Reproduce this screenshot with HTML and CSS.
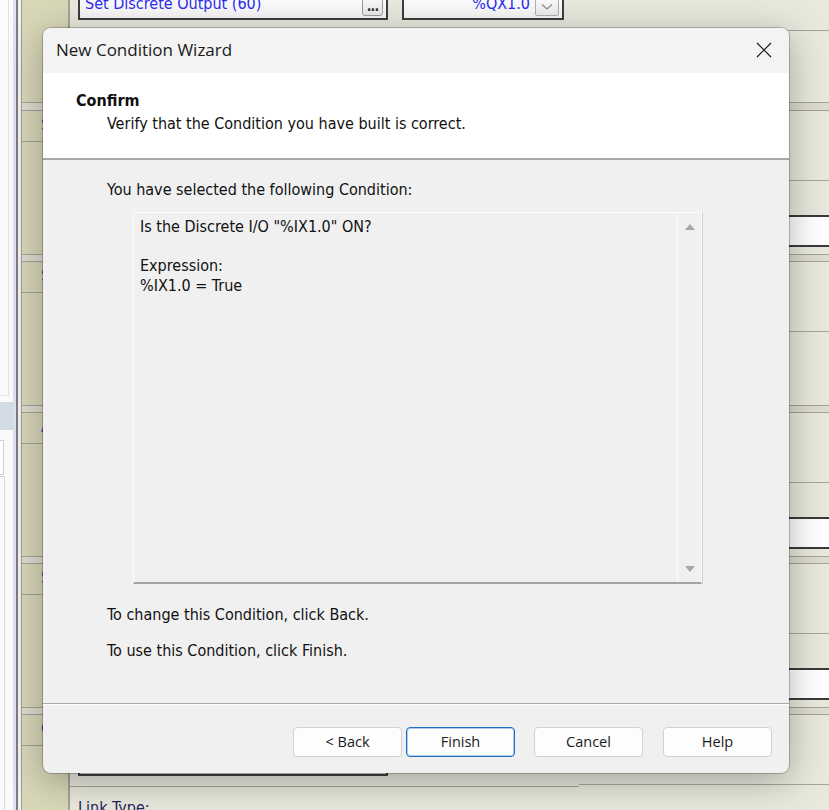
FILE: index.html
```html
<!DOCTYPE html>
<html>
<head>
<meta charset="utf-8">
<link rel="stylesheet" href="styles.css">
</head>
<body>
<div class="screen">
  <div class="sidebar">
    <div class="side-panel">
      <div class="sp-box1"></div>
      <div class="sp-blue"></div>
      <div class="sp-box2"></div>
      <div class="sp-box3"></div>
    </div>
    <div class="side-lilac"></div>
    <div class="side-dark"></div>
    <div class="side-light"></div>
  </div>

  <div class="form">
    <div class="topsec">
      <div class="g-label"></div>
      <div class="g-body">
        <div class="g-main">
          <div class="fieldrow top-fields">
            <div class="field action">
              <span class="field-text">Set Discrete Output (60)</span>
              <span class="dots-btn">...</span>
            </div>
            <div class="field target">
              <span class="field-text right">%QX1.0</span>
              <span class="drop-btn"><svg width="14" height="8" viewBox="0 0 14 8"><path d="M2 1.5 L7 6 L12 1.5" fill="none" stroke="#8a8a8a" stroke-width="1.2"/></svg></span>
            </div>
          </div>
        </div>
        <div class="g-side"><div class="side-line short"></div></div>
      </div>
    </div>

    <div class="group first">
      <div class="g-label"><div class="g-head">Step</div></div>
      <div class="g-body">
        <div class="g-main"></div>
        <div class="g-side"><div class="side-line"></div><div class="side-field"></div></div>
      </div>
    </div>

    <div class="group">
      <div class="g-label"><div class="g-head">Step</div></div>
      <div class="g-body">
        <div class="g-main"></div>
        <div class="g-side"><div class="side-line"></div></div>
      </div>
    </div>

    <div class="group">
      <div class="g-label"><div class="g-head">Action</div></div>
      <div class="g-body">
        <div class="g-main"></div>
        <div class="g-side"><div class="side-line"></div><div class="side-field"></div></div>
      </div>
    </div>

    <div class="group">
      <div class="g-label"><div class="g-head">Step</div></div>
      <div class="g-body">
        <div class="g-main"></div>
        <div class="g-side"><div class="side-line"></div><div class="side-field"></div></div>
      </div>
    </div>

    <div class="group last">
      <div class="g-label"><div class="g-head">Condition</div></div>
      <div class="g-body">
        <div class="g-main">
          <div class="fieldrow">
            <div class="field action low"></div>
          </div>
          <div class="rule"></div>
          <div class="link-label">Link Type:</div>
        </div>
        <div class="g-side"><div class="side-line"></div></div>
      </div>
    </div>
  </div>

  <div class="dialog">
    <div class="titlebar">
      <span class="title">New Condition Wizard</span>
      <svg class="close" width="16" height="16" viewBox="0 0 16 16"><path d="M1 1 L15 15 M15 1 L1 15" stroke="#1a1a1a" stroke-width="1.2"/></svg>
    </div>
    <div class="wiz-head">
      <div class="head-title">Confirm</div>
      <div class="head-sub">Verify that the Condition you have built is correct.</div>
    </div>
    <div class="wiz-body">
      <div class="lead">You have selected the following Condition:</div>
      <div class="summary">
        <div class="summary-text">
          <div class="sline">Is the Discrete I/O "%IX1.0" ON?</div>
          <div class="sline">&nbsp;</div>
          <div class="sline">Expression:</div>
          <div class="sline">%IX1.0 = True</div>
        </div>
        <div class="vscroll">
          <svg width="12" height="8" viewBox="0 0 12 8"><polygon points="6,1 11,7 1,7" fill="#a6a6a6"/></svg>
          <svg width="12" height="8" viewBox="0 0 12 8"><polygon points="1,1 11,1 6,7" fill="#a6a6a6"/></svg>
        </div>
      </div>
      <div class="note first-note">To change this Condition, click Back.</div>
      <div class="note">To use this Condition, click Finish.</div>
    </div>
    <div class="wiz-foot">
      <button class="btn">&lt; Back</button>
      <button class="btn primary">Finish</button>
      <button class="btn cancel">Cancel</button>
      <button class="btn help">Help</button>
    </div>
  </div>
</div>
</body>
</html>
```

FILE: styles.css
```css
* { box-sizing: border-box; }
html, body { margin: 0; padding: 0; }
body {
  width: 829px;
  height: 810px;
  overflow: hidden;
  font-family: "DejaVu Sans Condensed", "DejaVu Sans", sans-serif;
  font-stretch: condensed;
}

.screen {
  position: relative;
  width: 829px;
  height: 810px;
  display: flex;
  overflow: hidden;
  background: #e9e8dc;
}

/* ---------- left sidebar ---------- */
.sidebar { display: flex; flex: none; width: 21px; }
.side-panel { width: 13px; background: #fbfbfb; display: flex; flex-direction: column; }
.sp-box1 { width: 9px; height: 396px; border-right: 1px solid #e3e3e3; border-bottom: 1px solid #e3e3e3; }
.sp-blue { margin-top: 6px; height: 28px; background: #d4dce6; }
.sp-box2 { margin-top: 10px; width: 4px; height: 35px; border: 1px solid #cfcfcf; border-left: none; background: #fff; }
.sp-box3 { margin-top: 1px; flex: 1; width: 5px; border-top: 1px solid #cfcfcf; border-right: 1px solid #dadada; }
.side-lilac { width: 3px; background: #dfe2f3; }
.side-dark { width: 2px; background: #7d7d7d; }
.side-light { width: 3px; background: #f2f2f2; }

/* ---------- background form ---------- */
.form {
  flex: 1;
  display: flex;
  flex-direction: column;
  border-left: 1px solid #9c9c9c;
  background: #dedcce;
}
.topsec, .group { display: flex; flex: none; }
.topsec { height: 103px; border-bottom: 1px solid #a2a29c; background: #e9e8dc; }
.group {
  height: 145px;
  margin-top: 6px;
  border-top: 1px solid #a2a29c;
  border-bottom: 1px solid #a2a29c;
  background: #e9e8dc;
}
.group.first { margin-top: 7px; }
.group.last { height: 200px; border-bottom: none; }

.g-label {
  width: 48px;
  flex: none;
  background: #d8d7b8;
  border-right: 2px solid #a3a39b;
  overflow: hidden;
}
.g-head {
  height: 31px;
  border-bottom: 1px solid #a2a29c;
  padding-left: 19px;
  font-size: 16px;
  line-height: 28px;
  color: #4a3dc0;
  white-space: nowrap;
}
.g-body { flex: 1; display: flex; min-width: 0; }
.g-main { flex: 1; min-width: 0; }
.g-side { width: 250px; flex: none; }
.side-line { height: 70px; border-bottom: 1px solid #a6a6a0; }
.side-line.short { height: 31px; }
.side-field {
  margin-top: 34px;
  height: 32px;
  border-top: 2px solid #3a3a3a;
  border-bottom: 2px solid #3a3a3a;
  background: linear-gradient(to right, #d9d9d9, #ffffff 45%);
}

.fieldrow { display: flex; align-items: flex-start; }
.top-fields { margin-top: -12px; }
.field {
  height: 32px;
  border: 2px solid #3d3d3d;
  background: linear-gradient(#ffffff, #f4f4f4);
  display: flex;
  align-items: center;
  color: #2b2bf2;
  font-size: 16px;
}
.field.action { margin-left: 8px; width: 310px; padding-left: 5px; }
.field.target { margin-left: 14px; width: 162px; justify-content: flex-end; }
.field.low { margin-top: 29px; height: 32px; }
.field-text { flex: 1; white-space: nowrap; line-height: 28px; }
.field-text.right { text-align: right; padding-right: 5px; }
.dots-btn {
  width: 21px;
  height: 22px;
  margin-right: 3px;
  margin-top: 1px;
  border: 1px solid #9a9a9a;
  border-radius: 3px;
  background: linear-gradient(#fdfdfd, #e8e8e8);
  color: #333;
  font-size: 14px;
  font-weight: bold;
  line-height: 22px;
  text-align: center;
  letter-spacing: -1px;
}
.drop-btn {
  width: 24px;
  height: 22px;
  margin-right: 3px;
  margin-top: 1px;
  border: 1px solid #b0b0b0;
  border-radius: 2px;
  background: linear-gradient(#fdfdfd, #ececec);
  display: flex;
  align-items: center;
  justify-content: center;
  padding-top: 4px;
}
.rule { margin-top: 10px; height: 1px; background: #a4a49e; }
.link-label {
  margin-top: 11px;
  padding-left: 8px;
  font-size: 16px;
  color: #24245e;
  line-height: 20px;
}

/* ---------- dialog ---------- */
.dialog {
  position: absolute;
  left: 43px;
  top: 28px;
  width: 746px;
  height: 745px;
  border-radius: 8px;
  overflow: hidden;
  display: flex;
  flex-direction: column;
  background: #f0f0f0;
  box-shadow: 0 0 0 1px rgba(0, 0, 0, 0.22), 0 8px 36px rgba(0, 0, 0, 0.30);
  color: #111;
}
.titlebar {
  height: 45px;
  flex: none;
  display: flex;
  align-items: center;
  padding-left: 13px;
  padding-right: 17px;
  background: #f3f3f3;
}
.title {
  font-family: "Open Sans", "Noto Sans", sans-serif;
  font-stretch: normal;
  font-size: 17px;
  color: #1a1a1a;
  padding-bottom: 2px;
}
.close { margin-left: auto; margin-top: -2px; }

.wiz-head {
  height: 87px;
  flex: none;
  background: #ffffff;
  border-bottom: 2px solid #a8a8a8;
  padding-top: 18px;
  font-size: 16px;
  line-height: 20px;
}
.head-title { padding-left: 33px; font-weight: bold; color: #111; }
.head-sub { padding-left: 64px; margin-top: 3px; }

.wiz-body {
  flex: 1;
  padding-top: 20px;
  padding-left: 64px;
  font-size: 16px;
  line-height: 20px;
}
.summary {
  margin-top: 12px;
  margin-left: 26px;
  width: 569px;
  height: 372px;
  display: flex;
  border-top: 1px solid #fbfbfb;
  border-left: 1px solid #fbfbfb;
  border-right: 1px solid #fbfbfb;
  border-bottom: 2px solid #a3a3a3;
  box-shadow: 1px 0 0 #d0d0d0;
  background: #f0f0f0;
}
.summary-text { flex: 1; padding-top: 4px; padding-left: 6px; }
.sline { height: 19.5px; white-space: nowrap; }
.vscroll {
  width: 24px;
  flex: none;
  border-left: 1px solid #fbfbfb;
  display: flex;
  flex-direction: column;
  justify-content: space-between;
  align-items: center;
  padding-top: 10px;
  padding-bottom: 9px;
}
.note { margin-top: 16px; }
.note.first-note { margin-top: 21px; }

.wiz-foot {
  height: 70px;
  flex: none;
  border-top: 1px solid #a8a8a8;
  box-shadow: inset 0 1px 0 #ffffff;
  display: flex;
  justify-content: flex-end;
  align-items: flex-start;
  padding-top: 23px;
  padding-right: 17px;
}
.btn {
  width: 109px;
  height: 30px;
  margin: 0;
  padding: 0;
  border: 1px solid #d2d2d2;
  border-radius: 4px;
  background: #fdfdfd;
  font-family: "Open Sans", "Noto Sans", sans-serif;
  font-size: 14.5px;
  color: #1b1b1b;
  line-height: 26px;
}
.btn.primary {
  margin-left: 4px;
  border-color: #1f6fc5;
  box-shadow: inset 0 0 0 1px rgba(31, 111, 197, 0.35);
}
.btn.cancel { margin-left: 19px; }
.btn.help { margin-left: 20px; }
```
